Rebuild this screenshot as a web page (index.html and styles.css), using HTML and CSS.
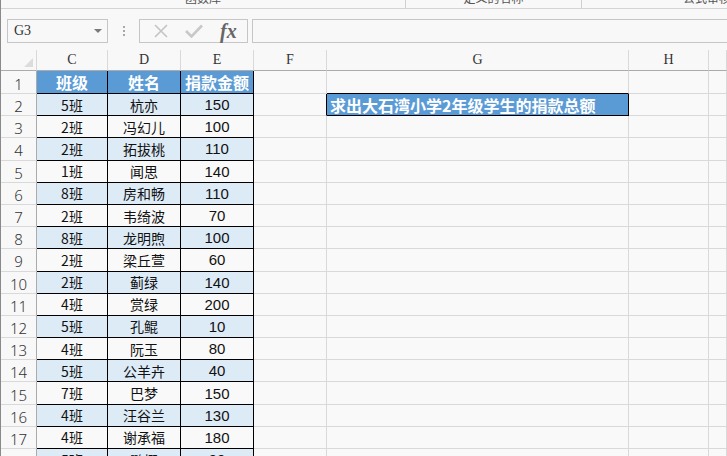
FILE: index.html
```html
<!DOCTYPE html>
<html lang="zh-CN">
  <head>
    <meta charset="UTF-8" />
    <meta name="viewport" content="width=device-width, initial-scale=1.0" />
    <title>捐款统计</title>
    <link rel="stylesheet" href="styles.css">
  </head>
  <body>
    <div class="app">
      <!-- ribbon group labels (cut off) -->
      <div class="ribbon">
        <div class="group g1"><span>函数库</span></div>
        <div class="group g2"><span>定义的名称</span></div>
        <div class="group g3"><span>公式审核</span></div>
      </div>

      <!-- formula bar -->
      <div class="formula-bar">
        <div class="name-box">
          <span>G3</span>
          <i class="caret"></i>
        </div>
        <div class="grip"><i></i><i></i><i></i></div>
        <div class="fx-buttons">
          <svg class="ico" width="18" height="18" viewBox="0 0 18 18">
            <path d="M3 3 L15 15 M15 3 L3 15" stroke="#c4c4c4" stroke-width="1.6" fill="none"/>
          </svg>
          <svg class="ico" width="20" height="18" viewBox="0 0 20 18">
            <path d="M2 9 L7.5 14.5 L18 3.5" stroke="#c8c8c8" stroke-width="2.6" fill="none"/>
          </svg>
          <span class="fx">fx</span>
        </div>
        <div class="formula-input"></div>
      </div>

      <!-- sheet -->
      <div class="sheet">
        <div class="corner"><i></i></div>
        <div class="ch">C</div>
        <div class="ch">D</div>
        <div class="ch">E</div>
        <div class="ch">F</div>
        <div class="ch">G</div>
        <div class="ch">H</div>
        <div class="ch"></div>

        <div class="rh">1</div>
        <div class="c t th">班级</div>
        <div class="c t th">姓名</div>
        <div class="c t th">捐款金额</div>
        <div class="c"></div>
        <div class="c note-top"></div>
        <div class="c"></div>
        <div class="c"></div>

        <div class="rh">2</div>
        <div class="c t alt">5班</div>
        <div class="c t alt">杭亦</div>
        <div class="c t alt num">150</div>
        <div class="c note-left"></div>
        <div class="c note">求出大石湾小学2年级学生的捐款总额</div>
        <div class="c"></div>
        <div class="c"></div>

        <div class="rh">3</div>
        <div class="c t">2班</div>
        <div class="c t">冯幻儿</div>
        <div class="c t num">100</div>
        <div class="c"></div><div class="c"></div><div class="c"></div><div class="c"></div>

        <div class="rh">4</div>
        <div class="c t alt">2班</div>
        <div class="c t alt">拓拔桃</div>
        <div class="c t alt num">110</div>
        <div class="c"></div><div class="c"></div><div class="c"></div><div class="c"></div>

        <div class="rh">5</div>
        <div class="c t">1班</div>
        <div class="c t">闻思</div>
        <div class="c t num">140</div>
        <div class="c"></div><div class="c"></div><div class="c"></div><div class="c"></div>

        <div class="rh">6</div>
        <div class="c t alt">8班</div>
        <div class="c t alt">房和畅</div>
        <div class="c t alt num">110</div>
        <div class="c"></div><div class="c"></div><div class="c"></div><div class="c"></div>

        <div class="rh">7</div>
        <div class="c t">2班</div>
        <div class="c t">韦绮波</div>
        <div class="c t num">70</div>
        <div class="c"></div><div class="c"></div><div class="c"></div><div class="c"></div>

        <div class="rh">8</div>
        <div class="c t alt">8班</div>
        <div class="c t alt">龙明煦</div>
        <div class="c t alt num">100</div>
        <div class="c"></div><div class="c"></div><div class="c"></div><div class="c"></div>

        <div class="rh">9</div>
        <div class="c t">2班</div>
        <div class="c t">梁丘萱</div>
        <div class="c t num">60</div>
        <div class="c"></div><div class="c"></div><div class="c"></div><div class="c"></div>

        <div class="rh">10</div>
        <div class="c t alt">2班</div>
        <div class="c t alt">蓟绿</div>
        <div class="c t alt num">140</div>
        <div class="c"></div><div class="c"></div><div class="c"></div><div class="c"></div>

        <div class="rh">11</div>
        <div class="c t">4班</div>
        <div class="c t">赏绿</div>
        <div class="c t num">200</div>
        <div class="c"></div><div class="c"></div><div class="c"></div><div class="c"></div>

        <div class="rh">12</div>
        <div class="c t alt">5班</div>
        <div class="c t alt">孔鲲</div>
        <div class="c t alt num">10</div>
        <div class="c"></div><div class="c"></div><div class="c"></div><div class="c"></div>

        <div class="rh">13</div>
        <div class="c t">4班</div>
        <div class="c t">阮玉</div>
        <div class="c t num">80</div>
        <div class="c"></div><div class="c"></div><div class="c"></div><div class="c"></div>

        <div class="rh">14</div>
        <div class="c t alt">5班</div>
        <div class="c t alt">公羊卉</div>
        <div class="c t alt num">40</div>
        <div class="c"></div><div class="c"></div><div class="c"></div><div class="c"></div>

        <div class="rh">15</div>
        <div class="c t">7班</div>
        <div class="c t">巴梦</div>
        <div class="c t num">150</div>
        <div class="c"></div><div class="c"></div><div class="c"></div><div class="c"></div>

        <div class="rh">16</div>
        <div class="c t alt">4班</div>
        <div class="c t alt">汪谷兰</div>
        <div class="c t alt num">130</div>
        <div class="c"></div><div class="c"></div><div class="c"></div><div class="c"></div>

        <div class="rh">17</div>
        <div class="c t">4班</div>
        <div class="c t">谢承福</div>
        <div class="c t num">180</div>
        <div class="c"></div><div class="c"></div><div class="c"></div><div class="c"></div>

        <div class="rh">18</div>
        <div class="c t alt">5班</div>
        <div class="c t alt">鹏栩</div>
        <div class="c t alt num">90</div>
        <div class="c"></div><div class="c"></div><div class="c"></div><div class="c"></div>
      </div>
    </div>
  </body>
</html>
```

FILE: styles.css
```css
:root {
  --bg: #f8f8f8;
  --grid: #d9d9d9;
  --frame: #c6c6c6;
  --head-line: #ababab;
  --blue: #5b9bd5;
  --blue-light: #ddebf7;
}

html, body {
  margin: 0;
  height: 100%;
  overflow: hidden;
}

body {
  background: var(--bg);
  font-family: "Noto Sans CJK SC", "Noto Sans", sans-serif;
  color: #111;
}

.app {
  height: 456px;
  border-left: 1px solid #8a8a8a;
  box-sizing: border-box;
  overflow: hidden;
}

/* ribbon labels */
.ribbon {
  display: flex;
  height: 8px;
  border-bottom: 1px solid #d4d4d4;
  overflow: hidden;
}
.group {
  flex: none;
  text-align: center;
  font-size: 12px;
  line-height: 12px;
  color: #555;
  box-sizing: border-box;
  white-space: nowrap;
}
.group span {
  display: block;
  margin-top: -8px;
}
.g1 { width: 405px; border-right: 1px solid #d0d0d0; }
.g2 { width: 176px; border-right: 1px solid #d0d0d0; }
.g3 { width: 250px; }

/* formula bar */
.formula-bar {
  display: flex;
  align-items: center;
  height: 24px;
  margin-top: 10px;
}
.name-box {
  flex: none;
  width: 101px;
  height: 24px;
  margin-left: 6px;
  border: 1px solid var(--frame);
  box-sizing: border-box;
  display: flex;
  align-items: center;
  padding-left: 6px;
  position: relative;
  font-family: "Liberation Serif", serif;
  font-size: 14px;
  color: #333;
}
.caret {
  position: absolute;
  right: 5px;
  top: 9px;
  border-left: 4px solid transparent;
  border-right: 4px solid transparent;
  border-top: 4px solid #7a7a7a;
}
.grip {
  flex: none;
  width: 31px;
  display: flex;
  flex-direction: column;
  align-items: center;
  gap: 2px;
}
.grip i {
  width: 2px;
  height: 2px;
  background: #a8a8a8;
}
.fx-buttons {
  flex: none;
  width: 109px;
  height: 24px;
  border: 1px solid var(--frame);
  box-sizing: border-box;
  display: flex;
  align-items: center;
  padding-left: 12px;
  gap: 14px;
}
.fx {
  font-family: "Liberation Serif", serif;
  font-style: italic;
  font-weight: bold;
  font-size: 20px;
  color: #666;
  margin-left: 2px;
  line-height: 20px;
}
.formula-input {
  flex: 1;
  height: 24px;
  margin-left: 4px;
  border: 1px solid var(--frame);
  border-right: none;
  box-sizing: border-box;
}

/* sheet grid */
.sheet {
  display: grid;
  grid-template-columns: 36px 71px 73px 73px 73px 302px 80px 1fr;
  grid-template-rows: 21px 23px repeat(17, 22.2px);
  margin-top: 7px;
  background: #f9f9f9;
}
.sheet > div {
  box-sizing: border-box;
  border-right: 1px solid var(--grid);
  border-bottom: 1px solid var(--grid);
  display: flex;
  align-items: center;
  justify-content: center;
  white-space: nowrap;
  overflow: hidden;
}

.corner {
  position: relative;
  background: var(--bg);
}
.sheet > .corner,
.sheet > .ch {
  border-bottom-color: var(--head-line);
}
.corner i {
  position: absolute;
  right: 3px;
  bottom: 3px;
  border-left: 9px solid transparent;
  border-bottom: 9px solid #dcdcdc;
}
.ch {
  background: var(--bg);
  font-family: "Liberation Serif", serif;
  font-size: 14px;
  color: #333;
}
.sheet > .rh {
  background: var(--bg);
  border-right-color: var(--head-line);
  font-family: "Noto Sans", sans-serif;
  font-size: 15px;
  font-weight: 300;
  color: #333;
  padding-top: 3px;
}

.c {
  font-size: 14px;
}
.sheet > .t {
  border-right-color: #000;
  border-bottom-color: #000;
}
.alt {
  background: var(--blue-light);
}
.th {
  background: var(--blue);
  color: #fff;
  font-weight: bold;
  font-size: 16px;
}
.num {
  font-family: "Liberation Sans", Arial, sans-serif;
  font-size: 15px;
}

.sheet > .note-top { border-bottom-color: #000; }
.sheet > .note-left { border-right-color: #000; }
.sheet > .note {
  background: var(--blue);
  color: #fff;
  font-weight: bold;
  font-size: 16px;
  justify-content: flex-start;
  padding-left: 3px;
  border-right-color: #000;
  border-bottom-color: #000;
}
```
